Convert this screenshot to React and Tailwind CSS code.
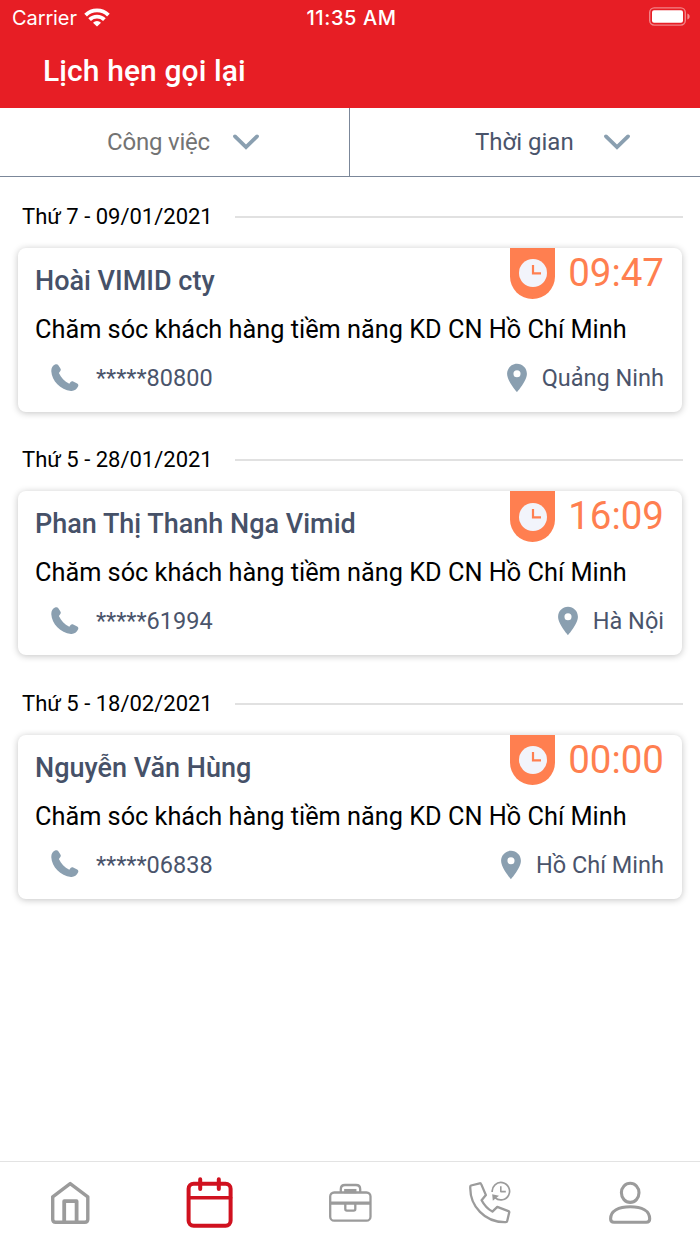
import { MdLocationOn } from 'react-icons/md'

const appointments = [
  { id: 1, date: 'Thứ 7 - 09/01/2021', name: 'Hoài VIMID cty', time: '09:47', phone: '*****80800', city: 'Quảng Ninh' },
  { id: 2, date: 'Thứ 5 - 28/01/2021', name: 'Phan Thị Thanh Nga Vimid', time: '16:09', phone: '*****61994', city: 'Hà Nội' },
  { id: 3, date: 'Thứ 5 - 18/02/2021', name: 'Nguyễn Văn Hùng', time: '00:00', phone: '*****06838', city: 'Hồ Chí Minh' },
]

const tabs = [
  { id: 'home', icon: HomeIcon },
  { id: 'calendar', icon: CalendarIcon },
  { id: 'work', icon: BriefcaseIcon },
  { id: 'calls', icon: CallHistoryIcon },
  { id: 'profile', icon: ProfileIcon },
]

function WifiIcon() {
  return (
    <svg width="26" height="20" viewBox="0 0 26 20" fill="none" stroke="white" strokeWidth="3.8">
      <path d="M1.6 7.1a16.2 16.2 0 0 1 22.8 0" />
      <path d="M5.6 11.6a10.6 10.6 0 0 1 14.8 0" />
      <path d="M13 18.6l-4-3.8a5.6 5.6 0 0 1 8 0z" fill="white" stroke="none" />
    </svg>
  )
}

function BatteryIcon() {
  return (
    <svg width="42" height="20" viewBox="0 0 42 20">
      <rect x="0.7" y="0.9" width="35.6" height="17.2" rx="4.5" fill="none" stroke="white" strokeOpacity="0.45" strokeWidth="1.4" />
      <rect x="3" y="3.2" width="31" height="12.6" rx="2" fill="white" />
      <path d="M38.4 6.5c3 1 3 5 0 6z" fill="white" fillOpacity="0.5" />
    </svg>
  )
}

function Chevron() {
  return (
    <svg width="26" height="16" viewBox="0 0 26 16" fill="none" stroke="#8a9fb0" strokeWidth="3.8" strokeLinecap="round">
      <path d="M2 2.4l11 10.6L24 2.4" />
    </svg>
  )
}

function PhoneIcon() {
  return (
    <svg width="28" height="28" viewBox="0 0 28 28" fill="#8a9fb0">
      <path d="M4 .6C5.600 -.1 6.600 .2 7.500 1.500L9.400 4.500C10.100 5.700 9.900 6.500 9 7.500L7.900 8.900C10 13.500 13.500 17.200 18.300 19.700L19.600 18C20.300 17.200 21.200 17 22.200 17.500L26.200 19.500C27.400 20.200 27.600 21.200 27 22.600C25.800 25.500 23 27.300 20 27C9.500 25.800 .8 17 .3 7.200C.2 4.400 1.500 1.800 4 .6Z" />
    </svg>
  )
}

function ClockIcon() {
  return (
    <svg width="28" height="28" viewBox="0 0 28 28">
      <circle cx="14" cy="14" r="14" fill="#f2f4fb" />
      <path d="M14 6v8.300h8" fill="none" stroke="#ff7f50" strokeWidth="2.200" />
    </svg>
  )
}

function HomeIcon() {
  return (
    <svg width="50" height="50" viewBox="45 1178 50 50" fill="none" stroke="#9b9b9b" strokeWidth="3.4" strokeLinejoin="round">
      <path d="M52.7 1196.8L70.2 1183.6L87.8 1196.8V1219.2Q87.8 1222.2 84.8 1222.2H55.7Q52.7 1222.2 52.7 1219.2Z" />
      <path d="M64.2 1222V1201.2H76.600V1222" strokeWidth="3.800" />
    </svg>
  )
}

function CalendarIcon() {
  return (
    <svg width="54" height="54" viewBox="183 1176 54 54" fill="none" stroke="#d0111f" strokeWidth="4" strokeLinecap="round">
      <rect x="188.6" y="1183.7" width="42" height="42" rx="5" />
      <path d="M189 1197.8h41.6" strokeWidth="3.6" />
      <path d="M200.2 1179.2v9.8M218.8 1179.2v9.8" />
    </svg>
  )
}

function BriefcaseIcon() {
  return (
    <svg width="50" height="50" viewBox="325 1178 50 50" fill="none" stroke="#9b9b9b" strokeWidth="2.3">
      <rect x="330.2" y="1192.5" width="40.3" height="28.2" rx="4" />
      <path d="M340.8 1192.5v-3.2q0-4.3 4.2-4.3h11q4.2 0 4.2 4.3v3.2" />
      <rect x="345.300" y="1190.1" width="10" height="2" />
      <path d="M330 1203.2h40.6" strokeWidth="3.2" />
      <path d="M345.3 1204v5q0 1.6 1.6 1.6h6.8q1.6 0 1.6-1.6v-5" />
    </svg>
  )
}

function CallHistoryIcon() {
  return (
    <svg width="50" height="50" viewBox="465 1178 50 50" fill="none" stroke="#9b9b9b" strokeWidth="2.300" strokeLinejoin="round">
      <path d="M471 1185.5L479.7 1183.3Q480.8 1183.1 481.2 1184.1L485.9 1195.1L481.6 1200.2Q485.6 1207.8 492.4 1211.6L497.3 1206.9L508.4 1211.1Q509.5 1211.5 509.2 1212.6L507.2 1221Q507 1222.2 505.8 1222.2C485 1222.8 469.5 1206 470.3 1186.5Q470.3 1185.7 471 1185.5Z" />
      <path d="M492.2 1192A8.700 8.700 0 1 1 495 1197.600" strokeWidth="1.7" />
      <path d="M500.800 1186.300v5.300h5" strokeWidth="1.6" />
      <path d="M492.200 1194.200l6.800 1.500-6.200 5z" fill="#9b9b9b" stroke="none" />
    </svg>
  )
}

function ProfileIcon() {
  return (
    <svg width="50" height="50" viewBox="605 1178 50 50" fill="none" stroke="#9b9b9b" strokeWidth="3.1">
      <ellipse cx="630.2" cy="1192.8" rx="8.8" ry="9.6" />
      <path d="M610.6 1218.8c0-8 8-12.1 19.6-12.1s19.5 4.1 19.500 12.1c0 2.4-1 3.4-3.4 3.4h-32.300c-2.4 0-3.4-1-3.4-3.4z" />
    </svg>
  )
}

function AppointmentCard({ item }) {
  return (
    <section className="h-[243.4px]">
      <div className="flex h-10 items-center pl-[22px] pr-[17px]">
        <span className="w-[213px] text-[22px] leading-8 text-black">{item.date}</span>
        <span className="h-0.5 flex-1 bg-[#e1e1e1]" />
      </div>
      <div className="mx-[18px] mt-[11px] h-[164px] rounded-lg bg-white pl-[17px] pr-[18px] shadow-[0_1px_7px_rgba(0,0,0,0.24)]">
        <div className="flex h-[57px] items-start">
          <h2 className="flex-1 pt-[17px] text-[27px] font-medium leading-8 text-[#465168]">{item.name}</h2>
          <div className="flex h-[50.5px] w-[45px] items-center justify-center rounded-b-full bg-[#ff7f50]">
            <ClockIcon />
          </div>
          <span className="w-[109px] text-right text-[38.5px] leading-[50px] text-[#ff7f50]">{item.time}</span>
        </div>
        <p className="pt-[9px] text-[25.3px] leading-8 text-black">Chăm sóc khách hàng tiềm năng KD CN Hồ Chí Minh</p>
        <div className="mt-[14px] flex h-9 items-center text-[23.5px] leading-8 text-[#4a546b]">
          <span className="ml-4 mr-[17px] -mt-px">
            <PhoneIcon />
          </span>
          <span className="flex-1">{item.phone}</span>
          <MdLocationOn size={34} className="mr-2 text-[#8a9fb0]" />
          <span>{item.city}</span>
        </div>
      </div>
    </section>
  )
}

export default function App() {
  return (
    <div className="flex h-[1244px] w-[700px] flex-col overflow-hidden bg-white font-['Roboto',sans-serif]">
      <header className="h-[108px] bg-[#e71e25] text-white">
        {/* Status bar */}
        <div className="flex h-9 items-center pl-3 pr-[9px] font-['Inter',sans-serif] text-[20px]">
          <div className="flex flex-1 items-center gap-[7px]">
            <span className="tracking-[-0.1px]">Carrier</span>
            <WifiIcon />
          </div>
          <span className="font-medium tracking-[0.6px]">11:35 AM</span>
          <div className="-mt-0.5 flex flex-1 justify-end">
            <BatteryIcon />
          </div>
        </div>
        <h1 className="pl-[43px] text-[30px] font-medium leading-[70px] tracking-[0.1px]">Lịch hẹn gọi lại</h1>
      </header>

      {/* Filters */}
      <div className="flex h-[69px] border-b border-[#7b8799] text-[24px]">
        <button className="flex w-[350px] items-center border-r border-[#7b8799] pl-[107px] text-[#737373]">
          <span className="w-[126px] text-left tracking-[-0.2px]">Công việc</span>
          <Chevron />
        </button>
        <button className="flex flex-1 items-center pl-[125px] text-[#4a546b]">
          <span className="w-[129px] text-left">Thời gian</span>
          <Chevron />
        </button>
      </div>

      <main className="flex-1 pt-5">
        {appointments.map((item) => (
          <AppointmentCard key={item.id} item={item} />
        ))}
      </main>

      {/* Bottom navigation */}
      <nav className="grid h-[83px] grid-cols-5 border-t border-[#e3e3e3]">
        {tabs.map(({ id, icon: Icon }) => (
          <button key={id} className="flex items-center justify-center">
            <Icon />
          </button>
        ))}
      </nav>
    </div>
  )
}
